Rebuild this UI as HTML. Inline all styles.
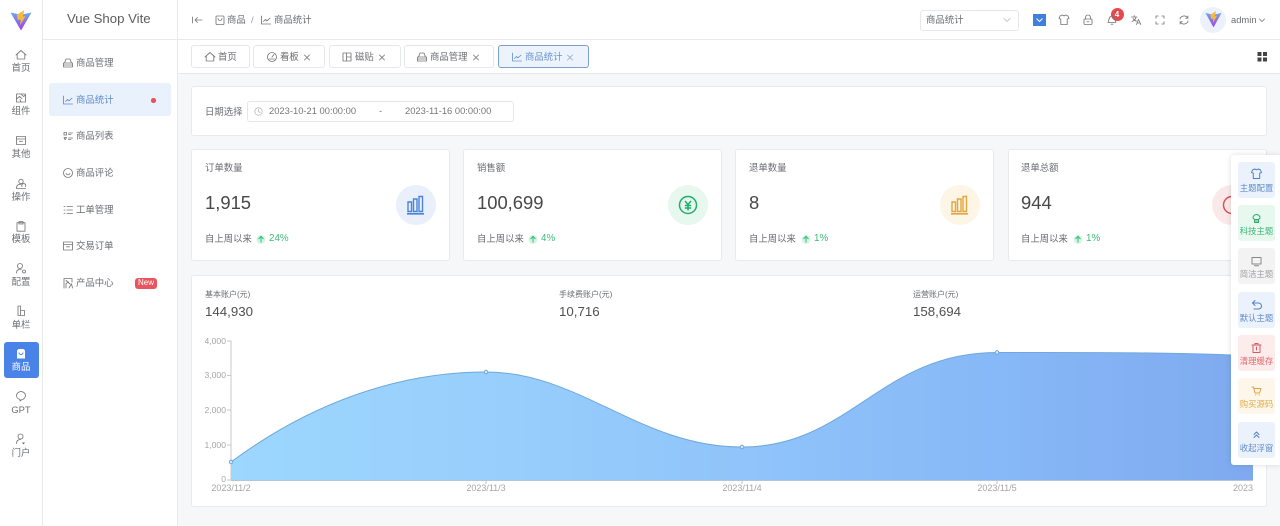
<!DOCTYPE html>
<html lang="zh">
<head>
<meta charset="utf-8">
<title>Vue Shop Vite</title>
<style>
html,body{margin:0;padding:0;width:1280px;height:526px;overflow:hidden;background:#f5f7f9;font-family:"Liberation Sans","Noto Sans CJK SC",sans-serif;color:#6a6d72}
.b{position:absolute;box-sizing:border-box}
.t{position:absolute;white-space:nowrap;line-height:14px;height:14px;font-size:9.4px;color:#6a6d72}
.c{transform:translateX(-50%)}
.card{position:absolute;box-sizing:border-box;background:#fff;border:1px solid #e8eaed;border-radius:3px}
.tab{position:absolute;box-sizing:border-box;top:45px;height:23px;background:#fff;border:1px solid #e4e7ed;border-radius:3px}
.btn{position:absolute;left:7px;width:37px;height:36px;border-radius:3px}
.btn span{position:absolute;left:0;width:37px;text-align:center;top:20px;font-size:8.4px;line-height:12px;white-space:nowrap}
svg{position:absolute;left:0;top:0;overflow:visible}
.s{fill:none;stroke:#777;stroke-width:.85;stroke-linecap:round;stroke-linejoin:round}
.ax{font-size:8.6px;color:#a6a6a6}
.xl{font-size:9px;color:#a6a6a6}
.h{font-size:8px}
.n{font-size:18.4px;height:22px;line-height:22px;color:#484848;top:192px}
.m{font-size:13.3px;height:16px;line-height:16px;color:#505050;top:304px}
.g{color:#3dba7a;top:232px;font-size:9.8px}
</style>
</head>
<body>
<!-- frames -->
<div class="b" style="left:0;top:0;width:43px;height:526px;background:#fff;border-right:1px solid #e6e8eb"></div>
<div class="b" style="left:43px;top:0;width:135px;height:526px;background:#fff;border-right:1px solid #e9ebee"></div>
<div class="b" style="left:43px;top:39px;width:134px;height:1px;background:#e8eaed"></div>
<div class="b" style="left:178px;top:0;width:1102px;height:40px;background:#fff;border-bottom:1px solid #e6e8eb"></div>
<div class="b" style="left:178px;top:40px;width:1102px;height:34px;background:#fff;border-bottom:1px solid #e6e8eb"></div>

<!-- rail -->
<div class="b" style="left:4px;top:342px;width:35px;height:36px;background:#4a83e8;border-radius:3px"></div>
<div class="t c" style="left:21px;top:61px">首页</div>
<div class="t c" style="left:21px;top:104px">组件</div>
<div class="t c" style="left:21px;top:147px">其他</div>
<div class="t c" style="left:21px;top:190px">操作</div>
<div class="t c" style="left:21px;top:232px">模板</div>
<div class="t c" style="left:21px;top:275px">配置</div>
<div class="t c" style="left:21px;top:318px">单栏</div>
<div class="t c" style="left:21px;top:360px;color:#fff">商品</div>
<div class="t c" style="left:21px;top:403px">GPT</div>
<div class="t c" style="left:21px;top:446px">门户</div>

<!-- menu -->
<div class="t" style="left:67px;top:11px;font-size:13.2px;color:#5c5c5c;line-height:15px;height:15px">Vue Shop Vite</div>
<div class="b" style="left:49px;top:83px;width:122px;height:33px;background:#e9f1fc;border-radius:3px"></div>
<div class="t" style="left:76px;top:56px">商品管理</div>
<div class="t" style="left:76px;top:93px;color:#5f8ccb">商品统计</div>
<div class="t" style="left:76px;top:129px">商品列表</div>
<div class="t" style="left:76px;top:166px">商品评论</div>
<div class="t" style="left:76px;top:203px">工单管理</div>
<div class="t" style="left:76px;top:239px">交易订单</div>
<div class="t" style="left:76px;top:276px">产品中心</div>
<div class="b" style="left:151px;top:98px;width:4.500px;height:4.500px;border-radius:50%;background:#ee4f5c"></div>
<div class="b" style="left:135px;top:278px;width:22px;height:10.500px;border-radius:3px;background:#e8555c;color:#fff;font-size:8px;line-height:10.500px;text-align:center">New</div>

<!-- header -->
<div class="t" style="left:227px;top:13px">商品</div>
<div class="t" style="left:251px;top:13px;color:#999">/</div>
<div class="t" style="left:274px;top:13px">商品统计</div>
<div class="b" style="left:920px;top:10px;width:99px;height:21px;border:1px solid #e4e7ed;border-radius:3px;background:#fff"></div>
<div class="t" style="left:926px;top:13px">商品统计</div>
<div class="b" style="left:1033px;top:14px;width:13px;height:12px;background:#3f7fe0"></div>
<div class="b" style="left:1110.500px;top:7.500px;width:13px;height:13px;border-radius:50%;background:#e5484d;color:#fff;font-size:8px;line-height:13px;text-align:center;font-weight:bold">4</div>
<div class="b" style="left:1200px;top:7px;width:26px;height:26px;border-radius:50%;background:#edf1fa"></div>
<div class="t" style="left:1231px;top:13px;color:#6a6d72">admin</div>

<!-- tabs -->
<div class="tab" style="left:191px;width:59px"></div>
<div class="tab" style="left:253px;width:72px"></div>
<div class="tab" style="left:329px;width:72px"></div>
<div class="tab" style="left:404px;width:90px"></div>
<div class="tab" style="left:498px;width:91px;background:#ecf3fc;border-color:#7f9fc8"></div>
<div class="t" style="left:218px;top:50px">首页</div>
<div class="t" style="left:280px;top:50px">看板</div>
<div class="t" style="left:355px;top:50px">磁贴</div>
<div class="t" style="left:430px;top:50px">商品管理</div>
<div class="t" style="left:525px;top:50px;color:#6a95cd">商品统计</div>

<!-- date -->
<div class="card" style="left:191px;top:86px;width:1076px;height:50px"></div>
<div class="t" style="left:205px;top:105px">日期选择</div>
<div class="b" style="left:247px;top:101px;width:267px;height:21px;border:1px solid #e4e7ed;border-radius:3px"></div>
<div class="t" style="left:269px;top:104px;color:#777">2023-10-21 00:00:00</div>
<div class="t" style="left:379px;top:104px;color:#777">-</div>
<div class="t" style="left:405px;top:104px;color:#777">2023-11-16 00:00:00</div>

<!-- stats -->
<div class="card" style="left:191px;top:149px;width:259px;height:112px"></div>
<div class="card" style="left:463px;top:149px;width:259px;height:112px"></div>
<div class="card" style="left:735px;top:149px;width:259px;height:112px"></div>
<div class="card" style="left:1008px;top:149px;width:259px;height:112px"></div>

<div class="t" style="left:205px;top:161px">订单数量</div>
<div class="t" style="left:477px;top:161px">销售额</div>
<div class="t" style="left:749px;top:161px">退单数量</div>
<div class="t" style="left:1021px;top:161px">退单总额</div>
<div class="t n" style="left:205px">1,915</div>
<div class="t n" style="left:477px">100,699</div>
<div class="t n" style="left:749px">8</div>
<div class="t n" style="left:1021px">944</div>
<div class="t" style="left:205px;top:232px">自上周以来</div>
<div class="t" style="left:477px;top:232px">自上周以来</div>
<div class="t" style="left:749px;top:232px">自上周以来</div>
<div class="t" style="left:1021px;top:232px">自上周以来</div>
<div class="t g" style="left:269px">24%</div>
<div class="t g" style="left:541px">4%</div>
<div class="t g" style="left:814px">1%</div>
<div class="t g" style="left:1086px">1%</div>

<!-- chart card -->
<div class="card" style="left:191px;top:275px;width:1076px;height:232px"></div>
<div class="t h" style="left:205px;top:288px">基本账户(元)</div>
<div class="t h" style="left:559px;top:288px">手续费账户(元)</div>
<div class="t h" style="left:913px;top:288px">运营账户(元)</div>
<div class="t m" style="left:205px">144,930</div>
<div class="t m" style="left:559px">10,716</div>
<div class="t m" style="left:913px">158,694</div>
<div class="t ax" style="right:1054px;top:334px">4,000</div>
<div class="t ax" style="right:1054px;top:368px">3,000</div>
<div class="t ax" style="right:1054px;top:403px">2,000</div>
<div class="t ax" style="right:1054px;top:438px">1,000</div>
<div class="t ax" style="right:1054px;top:472px">0</div>
<div class="t xl c" style="left:231px;top:481px">2023/11/2</div>
<div class="t xl c" style="left:486px;top:481px">2023/11/3</div>
<div class="t xl c" style="left:742px;top:481px">2023/11/4</div>
<div class="t xl c" style="left:997px;top:481px">2023/11/5</div>
<div class="t xl" style="left:1233px;top:481px;width:20px;overflow:hidden">2023/11/6</div>

<svg width="1280" height="526" viewBox="0 0 1280 526">
<defs>
<linearGradient id="g" x1="231" x2="1253" y1="0" y2="0" gradientUnits="userSpaceOnUse">
<stop offset="0" stop-color="#9cd7fe"/><stop offset=".25" stop-color="#98cffc"/><stop offset=".5" stop-color="#90c4fa"/><stop offset=".75" stop-color="#87b8f7"/><stop offset="1" stop-color="#7fa9ef"/>
</linearGradient>
<linearGradient id="v" x1="0" x2="0" y1="0" y2="1"><stop offset="0" stop-color="#6aa8f5"/><stop offset="1" stop-color="#a63ce0"/></linearGradient>
<g id="logo">
<path d="M0 0L10 2.200L20 0L10 18Z" fill="url(#v)"/>
<path d="M6 2.500L13 -2.500L11.800 4L14.500 3.500L9 13L9.800 7L7 7.500Z" fill="#f7b93a"/>
</g>
<path id="cup" d="M-4 -4L-1.800 -5L0 -4.200L1.800 -5L4 -4L5 -1.500L3.200 -.8V4.500H-3.200V-.8L-5 -1.500Z"/>
<path id="x" d="M-2.500 -2.500L2.500 2.500M2.500 -2.500L-2.500 2.500"/>
<g id="house"><path d="M-5 0L0 -4.500L5 0M-3.800 -1V4H3.800V-1"/></g>
<g id="chartline"><path d="M-4.500 -4V4H4.500M-2.500 1.500L-.5 -.5L1 .8L4 -1.800"/></g>
<g id="shop"><path d="M-4.500 0H4.500V4H-4.500ZM-3.500 0L-2 -4H2L3.500 0M-4.500 2H4.500"/></g>
</defs>

<!-- logos -->
<g transform="translate(10.500,12.500) scale(1.05,1)"><use href="#logo"/></g>
<g transform="translate(1205.500,13) scale(.8)"><use href="#logo"/></g>

<!-- rail icons -->
<g class="s">
<use href="#house" x="21" y="55"/>
<g transform="translate(21,98)"><rect x="-4.500" y="-4" width="9" height="8"/><path d="M-4.500 1L-1.500 -1.500L1 .5M0 -4L2.500 -1.500L4.500 -3M-1 1.500L0 4"/></g>
<g transform="translate(21,140.500)"><rect x="-4.500" y="-4" width="9" height="8"/><path d="M-4.500 -1.500H4.500M-1.500 .8H1.500"/></g>
<g transform="translate(21,184)"><circle cx="0" cy="-2.500" r="2.200"/><path d="M-4.500 4C-4.500 1 -2.500 .2 0 .2M-4.500 4.500H4.500M1 2.500A2 2 0 1 1 4.500 2.500"/></g>
<g transform="translate(21,226.500)"><rect x="-4" y="-3.800" width="8" height="8.500"/><path d="M-2 -5H2V-2.500H-2Z"/></g>
<g transform="translate(21,268.500)"><circle cx="-1" cy="-2.500" r="2.500"/><path d="M-4.500 4.500C-4.500 1.500 -2 .5 0 .8"/><circle cx="3" cy="3" r="1.500"/></g>
<g transform="translate(21,311)"><path d="M-3 -5H-.5V4.500H-3ZM-.5 -.5H3.500V4.500H-.5Z"/></g>
<g transform="translate(21,396)"><path d="M-4.500 -.5A4.500 4 0 1 1 1 3.500L-1 5L-1 3.400A4.500 4 0 0 1 -4.500 -.5Z"/></g>
<g transform="translate(21,439)"><circle cx="-.5" cy="-2.500" r="2.500"/><path d="M-4.500 4.500C-4.500 1.500 -2.500 .5 -.5 .5"/></g>
</g>
<path d="M22 439.500l1.500 0 1.500 0 -1.500 2z" fill="#666" transform="translate(0,3)"/>
<g transform="translate(21,354)"><path d="M-4 -3.500L-2.500 -5H2.500L4 -3.500V4.500H-4Z" fill="#fff"/><path d="M-2 -1.500A2 2 0 0 0 2 -1.500" fill="none" stroke="#4a83e8" stroke-width="1"/></g>

<!-- menu icons -->
<g class="s">
<use href="#shop" x="68" y="63"/>
<use href="#chartline" x="68" y="100" style="stroke:#5f8ccb"/>
<g transform="translate(68,136)"><rect x="-4" y="-3.500" width="2.500" height="2.500"/><path d="M.5 -3H4.500M.5 -1.500H3M.5 2H4.500M.5 3.500H3M-4 1.500L-2.800 3.800L-1.500 1.500Z"/></g>
<g transform="translate(68,173)"><circle r="4.500"/><path d="M-2 .5A2.200 2.200 0 0 0 2 .5"/></g>
<g transform="translate(68,210)"><path d="M-1 -3.500H4.500M-1 0H4.500M-1 3.500H4.500M-4 -3.500H-3M-4 0H-3M-4 3.500H-3"/></g>
<g transform="translate(68,246)"><rect x="-4.500" y="-4" width="9" height="8"/><path d="M-4.500 -1.500H4.500M-1.500 .8H1.500"/></g>
<g transform="translate(68,283)"><path d="M-4 5V-4.500H4V-1M-2 -2.500L2 1M-2 5V.5L.5 -1M1 5L3.500 .8L4.500 5"/></g>
</g>

<!-- header icons -->
<g class="s">
<path d="M192.500 17V23M202 20H195M197.500 17.500L195 20L197.500 22.500"/>
<g transform="translate(220,20)"><rect x="-4" y="-4" width="8" height="8.500" rx="1"/><path d="M-2 -1.500A2 2 0 0 0 2 -1.500"/></g>
<use href="#chartline" x="266" y="20"/>
<path d="M1004 18.500L1007 21.500L1010 18.500" style="stroke:#bbb"/>
<use href="#cup" x="1064" y="20"/>
<g transform="translate(1088,20)"><rect x="-4" y="-1" width="8" height="5.500" rx=".6"/><path d="M-2.500 -1V-2.500A2.500 2.500 0 0 1 2.500 -2.500V-1M-1 1.800H1"/></g>
<g transform="translate(1112,20)"><path d="M-4 2.500C-3 1.500 -3.500 -3.800 0 -4C3.500 -3.800 3 1.500 4 2.500ZM-1 4.200H1"/></g>
<g transform="translate(1136,20)"><path d="M-4.500 -3H1M-1.800 -4.500V-3M0 -3C-.5 -.5 -2 .8 -4 1.500M-3 -1.500C-2 0 -1 .8 .5 1.200M.5 4.500L2.500 -.5L4.800 4.500M1.300 3H4"/></g>
<g transform="translate(1160,20)"><path d="M-4 -1.800V-4H-1.800M1.800 -4H4V-1.800M4 1.800V4H1.800M-1.800 4H-4V1.800"/></g>
<g transform="translate(1184,20)"><path d="M-4 -1A4.200 4.200 0 0 1 3.500 -2.200M4 1A4.200 4.200 0 0 1 -3.500 2.200"/><path d="M3.900 -4V-1.800H1.700M-3.900 4V1.800H-1.700"/></g>
<path d="M1259.500 19L1262 21.500L1264.500 19"/>
<!-- tab icons -->
<use href="#house" x="210" y="57"/>
<g transform="translate(272,57)"><circle r="4.500"/><path d="M0 0L2 -2.500M-2.500 2H2.500"/></g>
<g transform="translate(347,57)"><rect x="-4" y="-4" width="8" height="8"/><path d="M-.5 -4V4M-.5 0H4"/></g>
<use href="#shop" x="422" y="57"/>
<use href="#chartline" x="517" y="57" style="stroke:#6a95cd"/>
<use href="#x" x="307" y="57.500"/>
<use href="#x" x="382" y="57.500"/>
<use href="#x" x="476" y="57.500"/>
<use href="#x" x="570" y="57.500" style="stroke:#8fa9cc"/>
<g transform="translate(258.500,111.500)" style="stroke:#bbb"><circle r="3.700"/><path d="M0 -2V0L1.500 1"/></g>
</g>
<path d="M1036.500 18.500L1039.500 21.500L1042.500 18.500" fill="none" stroke="#fff" stroke-width="1"/>
<g fill="#444"><rect x="1257.500" y="52" width="4" height="4"/><rect x="1263" y="52" width="4" height="4"/><rect x="1257.500" y="57.500" width="4" height="4"/><rect x="1263" y="57.500" width="4" height="4"/></g>

<!-- stat icons -->
<circle cx="416" cy="205" r="20" fill="#e9f0fb"/>
<circle cx="688" cy="205" r="20" fill="#e7f8ef"/>
<circle cx="960" cy="205" r="20" fill="#fdf5e6"/>
<circle cx="1232" cy="205" r="20" fill="#fbe9e9"/>
<g fill="none" stroke="#4a83d8" stroke-width="1.400">
<path d="M408 202h3.500v9.500h-3.500zM413.500 199h3.500v12.500h-3.500zM419 196.500h3.500v15h-3.500z"/>
<path d="M407 213.800H424" stroke-width="1.600"/>
</g>
<g fill="none" stroke="#e2a63b" stroke-width="1.400">
<path d="M952 202h3.500v9.500h-3.500zM957.500 199h3.500v12.500h-3.500zM963 196.500h3.500v15h-3.500z"/>
<path d="M951 213.800H968" stroke-width="1.600"/>
</g>
<g fill="none" stroke="#1fae6a" stroke-width="1.500">
<circle cx="688" cy="205" r="8.500"/>
<path d="M685 201L688 204.500L691 201M684.800 205.500H691.200M684.800 208H691.200M688 204.500V210.500"/>
</g>
<g fill="none" stroke="#df4f57" stroke-width="1.500">
<circle cx="1232" cy="205" r="8.500"/>
</g>
<g fill="#d7f3e3">
<circle cx="261" cy="239.500" r="4.500"/><circle cx="533" cy="239.500" r="4.500"/><circle cx="806" cy="239.500" r="4.500"/><circle cx="1078" cy="239.500" r="4.500"/>
</g>
<g fill="none" stroke="#2fbf7c" stroke-width="1">
<path d="M261 242.500V236.500M258.500 239L261 236.300L263.500 239"/>
<path d="M533 242.500V236.500M530.500 239L533 236.300L535.500 239"/>
<path d="M806 242.500V236.500M803.500 239L806 236.300L808.500 239"/>
<path d="M1078 242.500V236.500M1075.500 239L1078 236.300L1080.500 239"/>
</g>

<!-- chart -->
<path d="M231 462C312 402 400 372 486 372C580 372 640 447 742 447C850 447 880 352.500 997 352.500C1080 352.500 1170 352 1253 356V480H231Z" fill="url(#g)"/>
<path d="M231 462C312 402 400 372 486 372C580 372 640 447 742 447C850 447 880 352.500 997 352.500C1080 352.500 1170 352 1253 356" fill="none" stroke="#6ea8dd" stroke-width="1"/>
<path d="M231 340.500V480.500M227 341H231M227 375.500H231M227 410H231M227 445H231M227 480H231" fill="none" stroke="#c8c8c8" stroke-width="1"/>
<path d="M231 480.500H1253M486 480.500V484M742 480.500V484M997 480.500V484" fill="none" stroke="#b8c4d0" stroke-width="1"/>
<g fill="#cfe6fb" stroke="#5f9ad8" stroke-width=".8">
<circle cx="231" cy="462" r="1.800"/><circle cx="486" cy="372" r="1.800"/><circle cx="742" cy="447" r="1.800"/><circle cx="997" cy="352.500" r="1.800"/>
</g>
</svg>

<!-- floating panel -->
<div class="b" style="left:1231px;top:155px;width:49px;height:310px;background:#fff;border-radius:3px 0 0 3px;box-shadow:0 0 6px rgba(0,0,0,.13)">
<div class="btn" style="top:7px;background:#ebf2fc;color:#5f8ccb"><span>主题配置</span></div>
<div class="btn" style="top:50px;background:#e7f8ef;color:#3fb67a"><span>科技主题</span></div>
<div class="btn" style="top:93px;background:#f3f3f3;color:#a0a2a6"><span>简洁主题</span></div>
<div class="btn" style="top:137px;background:#ebf2fc;color:#5f8ccb"><span>默认主题</span></div>
<div class="btn" style="top:180px;background:#fdecec;color:#e06a6f"><span>清理缓存</span></div>
<div class="btn" style="top:223px;background:#fdf6ea;color:#e3ae50"><span>购买源码</span></div>
<div class="btn" style="top:267px;background:#ebf2fc;color:#5f8ccb"><span>收起浮窗</span></div>
<svg width="49" height="310" viewBox="1231 155 49 310">
<g fill="none" stroke-width="1" stroke-linecap="round" stroke-linejoin="round">
<use href="#cup" x="1256.500" y="174" stroke="#4f81c7"/>
<g transform="translate(1256.500,218)" stroke="#2fae6e"><path d="M-3.500 0A3.500 3.500 0 1 1 3.500 0L2 1.500H-2ZM-2 1.500V4.500H2V1.500M-2 3H2"/></g>
<g transform="translate(1256.500,261)" stroke="#888"><rect x="-4.500" y="-3.500" width="9" height="6.500"/><path d="M-2 4.800H2"/></g>
<g transform="translate(1256.500,305)" stroke="#4f81c7"><path d="M-3 -2H2A2.800 2.800 0 0 1 2 4H-2.500M-1.500 -4.500L-4 -2L-1.500 .5"/></g>
<g transform="translate(1256.500,348)" stroke="#dc5a5f"><path d="M-4.500 -3H4.500M-3.500 -3V4.500H3.500V-3M-1.500 -3V-4.500H1.500V-3M0 -1V2"/></g>
<g transform="translate(1256.500,391)" stroke="#e0a640"><path d="M-4.500 -4H-3L-1.500 2H3L4.500 -2.500H-2.300M-1 4H-.5M2.500 4H3"/></g>
<g transform="translate(1256.500,435)" stroke="#4f81c7"><path d="M-2.500 -.5L0 -3L2.500 -.5M-2.500 2.500L0 0L2.500 2.500"/></g>
</g>
</svg>
</div>
</body>
</html>
